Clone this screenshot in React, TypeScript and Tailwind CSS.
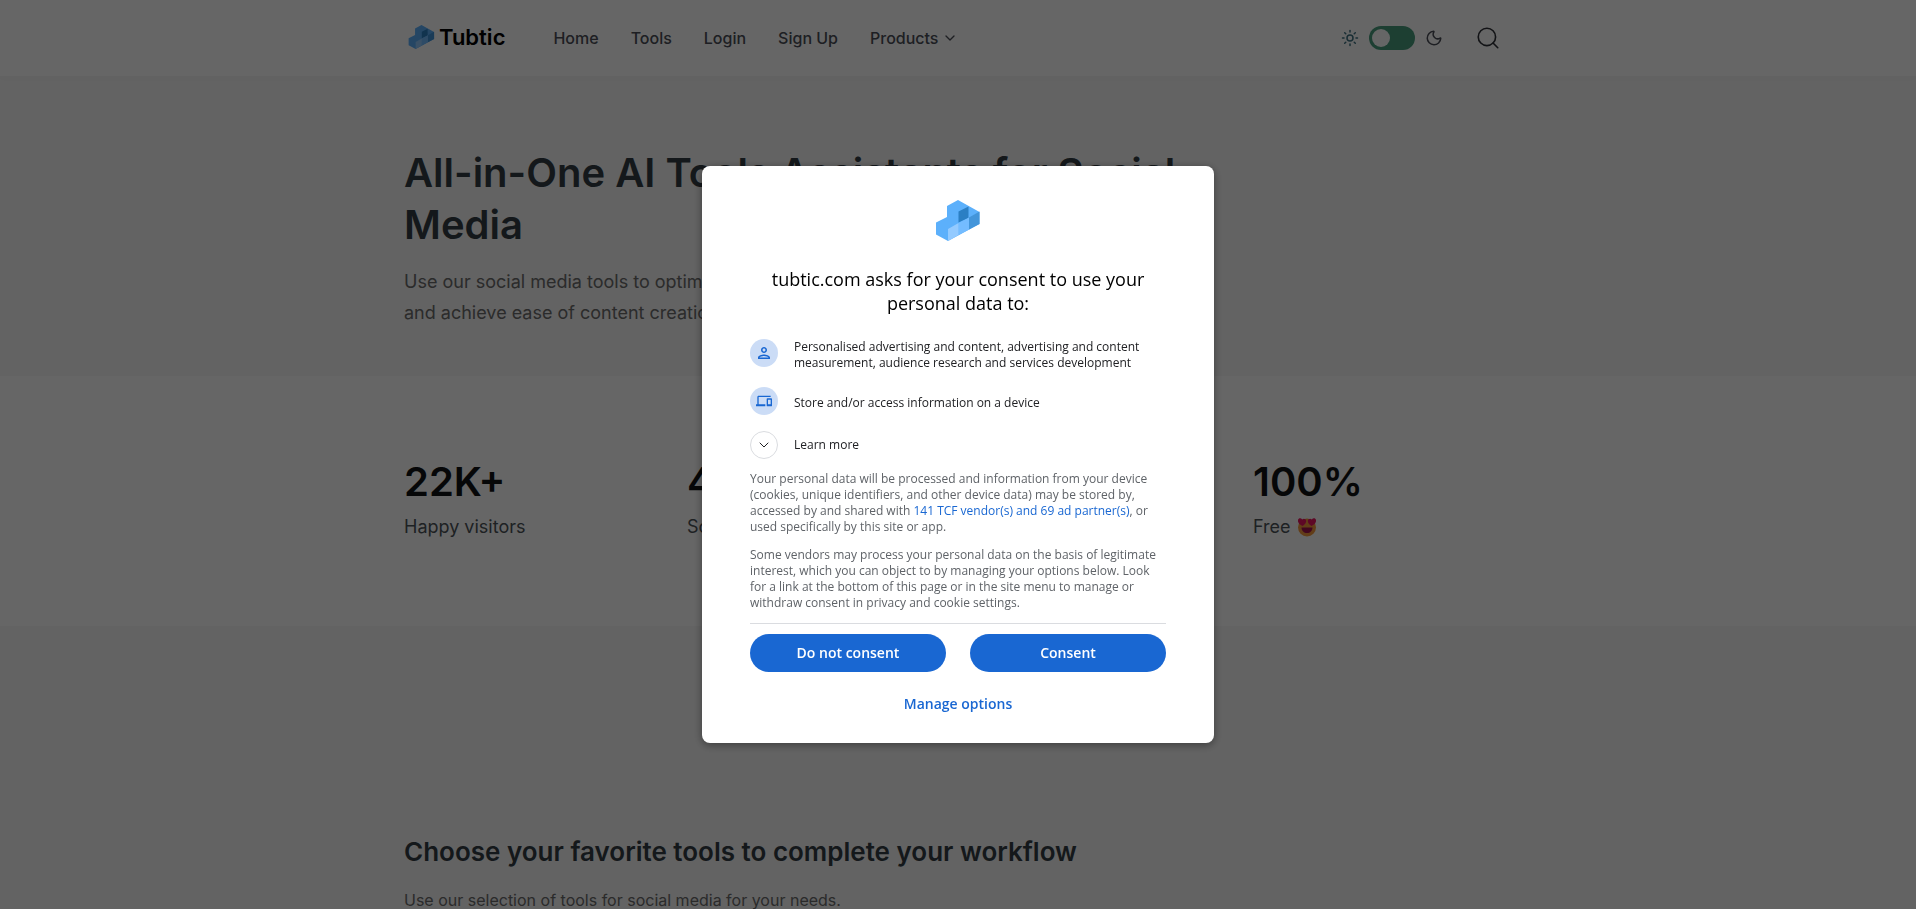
import type { ReactNode } from "react";
import { ChevronDown, Moon, Search, Sun } from "lucide-react";
import { MdDevices, MdOutlinePerson } from "react-icons/md";

const navLinks = ["Home", "Tools", "Login", "Sign Up"];

const Logo = ({ className }: { className?: string }) => (
  <svg viewBox="0 0 44 41" className={className} aria-hidden="true">
    <path d="M22 0 43.500 12V24L12 41 0 34.500V22.500L11 17V6Z" fill="#5cb0fb" />
    <path d="M22.500 11.500 32.500 6.500V18L22.500 22.500Z" fill="#2b7fc4" />
    <path d="M33 17.500 43.500 11.500V24L33 29.500Z" fill="#4395da" />
    <path d="M22.500 23 33 17.500V29.500L22.500 35Z" fill="#74bcff" />
    <path d="M12 29 22.500 23V35L12 41Z" fill="#93caff" />
  </svg>
);

const HeartEyes = () => (
  <svg viewBox="0 0 20 20" className="size-5" role="img" aria-label="Love it">
    <circle cx="10" cy="10.500" r="9" fill="#f59a3c" />
    <path d="M5.500 9C2.500 7.500.500 5.500 1 3 1.500 1 4 .800 5.200 2.600 6.500 1 9 1.800 9.200 3.800 9.400 6 7.500 8 5.500 9Z" fill="#e8165f" />
    <path d="M14.500 9C12.500 8 10.600 6 10.800 3.800 11 1.800 13.500 1 14.800 2.600 16 .800 18.500 1 19 3 19.500 5.500 17.500 7.500 14.500 9Z" fill="#e8165f" />
    <path d="M4.500 10.500H15.500C15.500 14 13 16 10 16S4.500 14 4.500 10.500Z" fill="#a3124f" />
  </svg>
);

const Container = ({ children, className = "" }: { children: ReactNode; className?: string }) => (
  <div className={`mx-auto max-w-[1132px] px-3 ${className}`}>{children}</div>
);

const Header = () => (
  <header className="relative bg-white shadow-[0_0_8px_rgba(0,0,0,0.03)]">
    <Container className="flex h-[76px] items-center">
      <a href="#" className="flex items-center gap-1 pb-[2px] pl-1 text-[22px] font-semibold text-black">
        <Logo className="h-6 w-[27px]" />
        Tubtic
      </a>
      <nav className="ml-12 flex items-center gap-8 text-base font-medium text-[#4b4f58]">
        {navLinks.map((link) => (
          <a key={link} href="#">{link}</a>
        ))}
        <button type="button" className="flex items-center gap-1">
          Products
          <ChevronDown className="size-4" />
        </button>
      </nav>
      <div className="ml-auto flex items-center pr-[11px]">
        <label className="flex items-center gap-[10px] text-[#4b4f58]">
          <Sun className="size-[18px] text-[#3f7282]" strokeWidth={2} />
          <input type="checkbox" role="switch" aria-label="Dark mode" className="peer sr-only" />
          <span className="flex h-6 w-[46px] items-center rounded-full bg-[#4a9d7e] p-[3px]">
            <span className="size-[18px] rounded-full bg-white" />
          </span>
          <Moon className="size-[18px]" strokeWidth={2} />
        </label>
        <button type="button" aria-label="Search" className="ml-8 text-[#2f3137]">
          <Search className="size-[26px]" strokeWidth={1.5} />
        </button>
      </div>
    </Container>
  </header>
);

const Hero = () => (
  <section className="bg-[#f7f7f7]">
    <Container className="h-[300px] pt-[71px]">
      <div className="max-w-[825px]">
        <h1 className="text-[40px] leading-[52px] font-semibold text-[#343d44]">
          All-in-One AI Tools Assistants for Social Media
        </h1>
        <p className="mt-[15px] text-lg leading-[31px] text-[#6c6c6c]">
          Use our social media tools to optimize
          <br />
          and achieve ease of content creation
        </p>
      </div>
    </Container>
  </section>
);

const Stat = ({ value, children, className = "" }: { value: string; children: ReactNode; className?: string }) => (
  <div className={className}>
    <div className="text-[40px] leading-[52px] font-semibold text-[#101314]">{value}</div>
    <div className="mt-[5px] flex items-center gap-[6px] text-lg text-[#4d5459]">{children}</div>
  </div>
);

const Stats = () => (
  <section className="bg-white">
    <div className="mx-auto grid h-[250px] max-w-[1132px] grid-cols-4 pt-20 [&>div]:px-3">
      <Stat value="22K+">Happy visitors</Stat>
      <Stat value="40">Social</Stat>
      <Stat value="100%" className="col-start-4">
        Free <HeartEyes />
      </Stat>
    </div>
  </section>
);

const ToolsIntro = () => (
  <section className="bg-[#f7f7f7]">
    <Container className="pt-[208px] pb-16">
      <h2 className="text-[26px] leading-9 font-semibold text-[#343d44]">
        Choose your favorite tools to complete your workflow
      </h2>
      <p className="mt-4 text-base leading-7 text-[#6c6c6c]">
        Use our selection of tools for social media for your needs.
      </p>
    </Container>
  </section>
);

const Purpose = ({ icon, children }: { icon: ReactNode; children: ReactNode }) => (
  <li className="flex min-h-8 items-start gap-4">
    <span className="flex size-7 shrink-0 items-center justify-center rounded-full bg-[#cbdcf6] text-[#1967d2]">
      {icon}
    </span>
    <span className="self-center">{children}</span>
  </li>
);

const ConsentDialog = () => (
  <div className="fixed inset-0 flex items-center justify-center bg-black/60 font-['Open_Sans',sans-serif]">
    <div
      role="dialog"
      aria-modal="true"
      aria-labelledby="consent-title"
      className="w-[512px] rounded-lg bg-white px-12 pt-[34px] pb-5 shadow-[0_2px_8px_rgba(0,0,0,0.4)]"
    >
      <Logo className="mx-auto h-[41px] w-11" />
      <h2 id="consent-title" className="mt-[26px] text-center text-lg leading-6 font-medium text-black">
        tubtic.com asks for your consent to use your personal data to:
      </h2>
      <div className="mt-6 text-xs leading-4 font-medium text-[#202124]">
        <ul className="space-y-4">
          <Purpose icon={<MdOutlinePerson className="size-[18px]" />}>
            Personalised advertising and content, advertising and content measurement, audience research and services
            development
          </Purpose>
          <Purpose icon={<MdDevices className="size-4" />}>Store and/or access information on a device</Purpose>
        </ul>
        <button type="button" className="mt-3 flex items-center gap-4">
          <span className="flex size-7 items-center justify-center rounded-full border border-[#dadce0]">
            <ChevronDown className="size-4" strokeWidth={1.5} />
          </span>
          Learn more
        </button>
      </div>
      <p className="mt-3 text-xs leading-4 text-[#5f6368]">
        Your personal data will be processed and information from your device (cookies, unique identifiers, and other
        device data) may be stored by, accessed by and shared with{" "}
        <a href="#" className="text-[#1967d2]">141 TCF vendor(s) and 69 ad partner(s)</a>, or used specifically by this
        site or app.
      </p>
      <p className="mt-3 text-xs leading-4 text-[#5f6368]">
        Some vendors may process your personal data on the basis of legitimate interest, which you can object to by
        managing your options below. Look for a link at the bottom of this page or in the site menu to manage or
        withdraw consent in privacy and cookie settings.
      </p>
      <div className="mt-3 grid grid-cols-2 gap-6 border-t border-[#dadce0] pt-[10px] text-sm font-semibold text-white">
        <button type="button" className="h-[38px] rounded-full bg-[#1967d2]">Do not consent</button>
        <button type="button" className="h-[38px] rounded-full bg-[#1967d2]">Consent</button>
      </div>
      <button type="button" className="mx-auto mt-[13px] block h-[38px] text-sm font-semibold text-[#1967d2]">
        Manage options
      </button>
    </div>
  </div>
);

export default function App() {
  return (
    <div className="h-screen overflow-hidden bg-[#f7f7f7] font-['Inter',sans-serif]">
      <Header />
      <main>
        <Hero />
        <Stats />
        <ToolsIntro />
      </main>
      <ConsentDialog />
    </div>
  );
}
